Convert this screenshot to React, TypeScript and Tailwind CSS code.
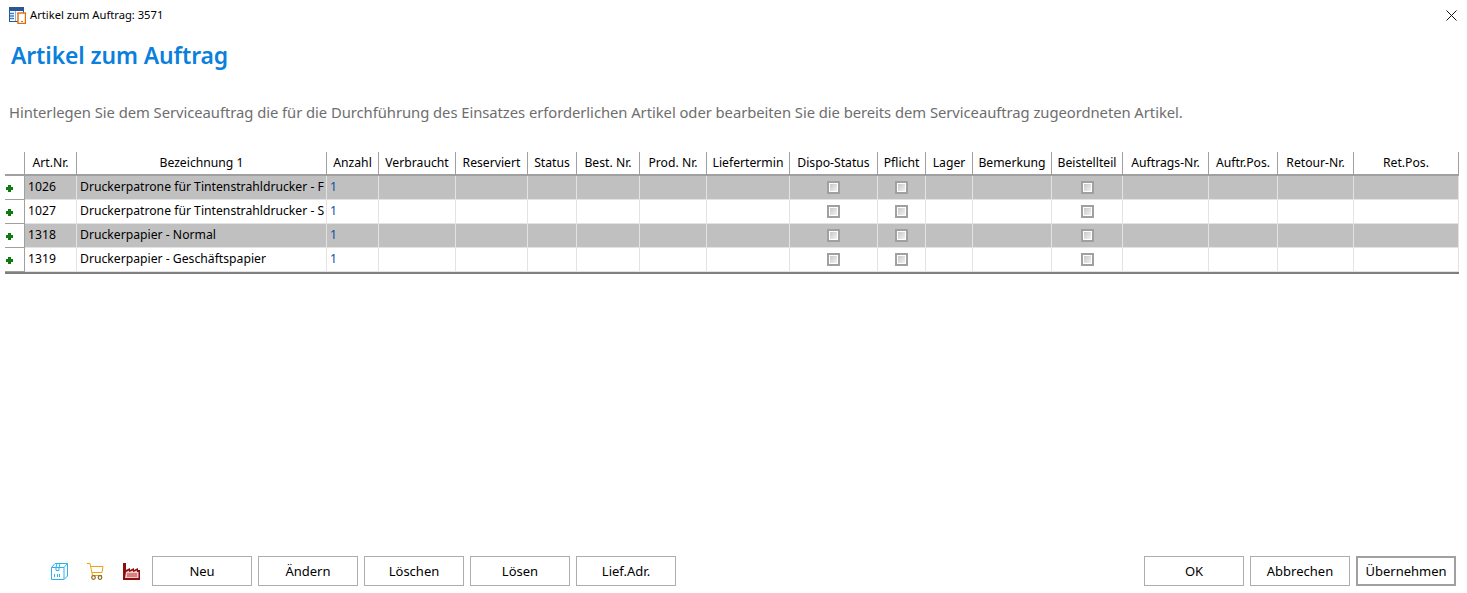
import React from 'react'

const columns = [
  { label: 'Art.Nr.' },
  { label: 'Bezeichnung 1' },
  { label: 'Anzahl' },
  { label: 'Verbraucht' },
  { label: 'Reserviert' },
  { label: 'Status' },
  { label: 'Best. Nr.' },
  { label: 'Prod. Nr.' },
  { label: 'Liefertermin' },
  { label: 'Dispo-Status', check: true },
  { label: 'Pflicht', check: true },
  { label: 'Lager' },
  { label: 'Bemerkung' },
  { label: 'Beistellteil', check: true },
  { label: 'Auftrags-Nr.' },
  { label: 'Auftr.Pos.' },
  { label: 'Retour-Nr.' },
  { label: 'Ret.Pos.' },
]

const rows = [
  { nr: '1026', name: 'Druckerpatrone für Tintenstrahldrucker - F', qty: '1' },
  { nr: '1027', name: 'Druckerpatrone für Tintenstrahldrucker - S', qty: '1' },
  { nr: '1318', name: 'Druckerpapier - Normal', qty: '1' },
  { nr: '1319', name: 'Druckerpapier - Geschäftspapier', qty: '1' },
]

const gridCols =
  'grid grid-cols-[20px_52px_250px_52px_77px_72px_49px_63px_67px_83px_88px_48px_47px_79px_71px_86px_69px_76px_105px]'

function PlusIcon() {
  return (
    <svg width="7" height="7" viewBox="0 0 7 7" className="mt-[3px]">
      <path d="M2 0h3v2h2v3H5v2H2V5H0V2h2z" fill="#0f7a0f" />
    </svg>
  )
}

function Check() {
  return (
    <div className="h-[13px] w-[13px] border-2 border-[#a0a0a0] bg-white p-px">
      <div className="h-full w-full bg-gradient-to-br from-[#c8c8c8] to-[#f2f2f2]" />
    </div>
  )
}

function Btn({ children, strong }: { children: React.ReactNode; strong?: boolean }) {
  return (
    <button
      className={
        'h-[30px] w-[100px] bg-white pt-px text-[13px] text-black ' +
        (strong ? 'border-2 border-[#a0a0a0]' : 'border border-[#adadad]')
      }
    >
      {children}
    </button>
  )
}

function AppIcon() {
  return (
    <svg width="17" height="17" viewBox="0 0 17 17">
      <rect x="0.5" y="0.5" width="14" height="14" fill="#fff" stroke="#2b5797" />
      <rect x="0" y="0" width="15" height="4" fill="#2b5797" />
      <path d="M1 6.5h4M1 9h4M1 11.5h4" stroke="#3f7fcf" strokeWidth="1.4" />
      <path d="M6.5 4v10M8 6.5h6" stroke="#8fb0dc" strokeWidth="1" />
      <rect x="9" y="6" width="7.5" height="10.5" fill="#fff" stroke="#e36c0a" strokeWidth="1.4" />
      <rect x="12" y="14" width="2" height="1" fill="#e36c0a" />
    </svg>
  )
}

function BoxIcon() {
  return (
    <svg width="17" height="17" viewBox="0 0 17 17" fill="none" stroke="#2fb2ea" strokeWidth="1">
      <path d="M0.5 4.5L4 0.5H16.5V13L13 16.5H0.5z" />
      <path d="M0.5 4.5H13V16.5M13 4.5L16.5 0.5" />
      <path d="M6 0.5L5 4.5V7.5H8V4.5L9 0.5" />
      <path d="M3.5 11v3M6.5 11v3M8.5 11v3" />
    </svg>
  )
}

function CartIcon() {
  return (
    <svg width="17" height="17" viewBox="0 0 17 17" fill="none">
      <path d="M0 0.5H3L5.5 12.5H15" stroke="#e8a317" strokeWidth="1" />
      <path d="M4 3.5H16L15 9.5H5" stroke="#e8a317" strokeWidth="1" />
      <circle cx="6.5" cy="14.5" r="1.8" stroke="#8a6a1f" strokeWidth="1.2" />
      <circle cx="13" cy="14.5" r="1.8" stroke="#8a6a1f" strokeWidth="1.2" />
    </svg>
  )
}

function FactoryIcon() {
  return (
    <svg width="17" height="17" viewBox="0 0 17 17">
      <path d="M0 0h3v7l4-2v2l4-2v2l4-2v2h2v10H0z" fill="#8b0f12" />
      <path d="M3 9l3-1.5V9l4-1.5V9l4-1.5V9h1.5v6H2z" fill="#f6c9c9" />
      <path d="M4 11h10M4 13h10" stroke="#b83a3a" strokeWidth="1" />
    </svg>
  )
}

export default function App() {
  return (
    <div className="flex h-[593px] w-[1467px] flex-col overflow-hidden bg-white text-black [font-family:'Noto_Sans',sans-serif]">
      <div className="flex h-[31px] shrink-0 items-center justify-between pr-[10px] pl-[9px]">
        <div className="flex items-center gap-1">
          <AppIcon />
          <span className="text-[11.2px]">Artikel zum Auftrag: 3571</span>
        </div>
        <svg width="11" height="11" viewBox="0 0 11 11" stroke="#111" strokeWidth="1">
          <path d="M0.5 0.5L10.5 10.5M10.5 0.5L0.5 10.5" />
        </svg>
      </div>

      <h1 className="mt-[8px] pl-[11px] text-[22.9px] leading-[34px] font-semibold tracking-[-0.1px] text-[#0a7fdc]">
        Artikel zum Auftrag
      </h1>

      <p className="mt-[29px] pl-[9px] text-[14.8px] leading-[20px] tracking-[-0.05px] text-[#6e6e6e]">
        Hinterlegen Sie dem Serviceauftrag die für die Durchführung des Einsatzes erforderlichen Artikel oder bearbeiten Sie die bereits dem Serviceauftrag zugeordneten Artikel.
      </p>

      <div className="mt-[30px] ml-[5px] w-[1454px] text-[12.2px]">
        <div className={gridCols + ' h-[24px] border-b-2 border-[#a0a0a0]'}>
          <div className="border-r border-[#a0a0a0]" />
          {columns.map((c) => (
            <div
              key={c.label}
              className="flex items-center justify-center overflow-hidden border-r border-[#a0a0a0] whitespace-nowrap"
            >
              {c.label}
            </div>
          ))}
        </div>
        {rows.map((r, i) => (
          <div key={r.nr} className={gridCols + ' h-[24px]'}>
            <div className="flex items-center border-r border-b border-[#a0a0a0] pb-px pl-px">
              <PlusIcon />
            </div>
            {columns.map((c, j) => (
              <div
                key={c.label}
                className={
                  'flex items-center overflow-hidden border-r border-b border-[#e3e3e3] whitespace-nowrap ' +
                  (i % 2 === 0 ? 'bg-[#c0c0c0] ' : 'bg-white ') +
                  (c.check ? 'justify-center' : 'pl-[3px]')
                }
              >
                {c.check ? <Check /> : null}
                {j === 0 ? r.nr : null}
                {j === 1 ? r.name : null}
                {j === 2 ? <span className="text-[#0f4fa0]">{r.qty}</span> : null}
              </div>
            ))}
          </div>
        ))}
        <div className="h-[2px] bg-[#808080]" />
      </div>

      <div className="mt-auto mb-[7px] flex items-center justify-between pr-[11px] pl-[51px]">
        <div className="flex items-center gap-[6px]">
          <div className="mr-[6px] flex items-center gap-[19px]">
            <BoxIcon />
            <CartIcon />
            <FactoryIcon />
          </div>
          <Btn>Neu</Btn>
          <Btn>Ändern</Btn>
          <Btn>Löschen</Btn>
          <Btn>Lösen</Btn>
          <Btn>Lief.Adr.</Btn>
        </div>
        <div className="flex items-center gap-[6px]">
          <Btn>OK</Btn>
          <Btn>Abbrechen</Btn>
          <Btn strong>Übernehmen</Btn>
        </div>
      </div>
    </div>
  )
}
